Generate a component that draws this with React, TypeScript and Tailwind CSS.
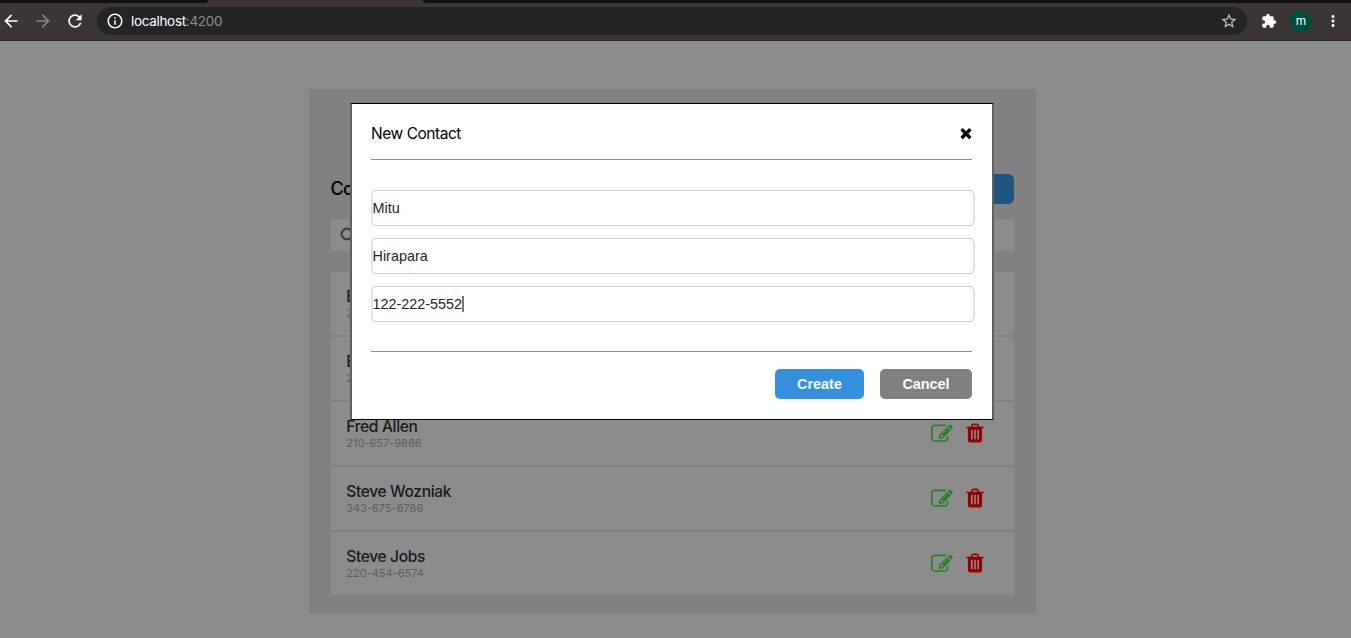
import React from "react";
import {
  MdArrowBack,
  MdArrowForward,
  MdExtension,
  MdInfoOutline,
  MdMoreVert,
  MdRefresh,
  MdStarBorder,
} from "react-icons/md";

const contacts = [
  { name: "Ed", phone: "210" },
  { name: "Ed", phone: "213" },
  { name: "Fred Allen", phone: "210-657-9886" },
  { name: "Steve Wozniak", phone: "343-675-8786" },
  { name: "Steve Jobs", phone: "220-454-6574" },
];

function EditIcon() {
  return (
    <svg viewBox="0 0 1792 1792" className="-mr-[0.4px] ml-[0.4px] size-[22px] shrink-0 fill-[#258025]">
      <path d="M888 1184l116-116-152-152-116 116v56h96v96h56zm440-720q-16-16-33 1l-350 350q-17 17-1 33t33-1l350-350q17-17 1-33zm80 594v190q0 119-84.5 203.5t-203.5 84.5h-832q-119 0-203.5-84.5t-84.5-203.5v-832q0-119 84.5-203.5t203.5-84.5h832q63 0 117 25 15 7 18 23 3 17-9 29l-49 49q-14 14-32 8-23-6-45-6h-832q-66 0-113 47t-47 113v832q0 66 47 113t113 47h832q66 0 113-47t47-113v-126q0-13 9-22l64-64q15-15 35-7t20 29zm-96-738l288 288-672 672h-288v-288zm444 132l-92 92-288-288 92-92q28-28 68-28t68 28l152 152q28 28 28 68t-28 68z" />
    </svg>
  );
}

function TrashIcon() {
  return (
    <svg viewBox="0 0 1792 1792" className="-mt-px size-[22px] shrink-0 fill-[#960000]">
      <path d="M704 1376v-704q0-14-9-23t-23-9h-64q-14 0-23 9t-9 23v704q0 14 9 23t23 9h64q14 0 23-9t9-23zm256 0v-704q0-14-9-23t-23-9h-64q-14 0-23 9t-9 23v704q0 14 9 23t23 9h64q14 0 23-9t9-23zm256 0v-704q0-14-9-23t-23-9h-64q-14 0-23 9t-9 23v704q0 14 9 23t23 9h64q14 0 23-9t9-23zm-544-992h448l-48-117q-7-9-17-11h-317q-10 2-17 11zm928 32v64q0 14-9 23t-23 9h-96v948q0 83-47 143.5t-113 60.5h-832q-66 0-113-58.5t-47-141.5v-952h-96q-14 0-23-9t-9-23v-64q0-14 9-23t23-9h309l70-167q15-37 54-63t79-26h320q40 0 79 26t54 63l70 167h309q14 0 23 9t9 23z" />
    </svg>
  );
}

function CloseIcon() {
  return (
    <svg viewBox="0 0 1792 1792" className="size-4 fill-black">
      <path d="M1490 1322q0 40-28 68l-136 136q-28 28-68 28t-68-28l-294-294-294 294q-28 28-68 28t-68-28l-136-136q-28-28-28-68t28-68l294-294-294-294q-28-28-28-68t28-68l136-136q28-28 68-28t68 28l294 294 294-294q28-28 68-28t68 28l136 136q28 28 28 68t-28 68l-294 294 294 294q28 28 28 68z" />
    </svg>
  );
}

function SearchIcon() {
  return (
    <svg viewBox="0 0 16 16" className="size-4 fill-none stroke-[#3c3c3c] stroke-[2.2]">
      <circle cx="6.9" cy="7" r="5.3" />
      <path d="M11 11l4 4" />
    </svg>
  );
}

function BrowserBar() {
  return (
    <header className="flex h-[41px] flex-col border-b border-[#2b2727] bg-[#3c3535]">
      <div className="flex h-[3px] justify-between">
        <div className="w-[208px] rounded-br-[5px] bg-[#121111]" />
        <div className="w-[928px] rounded-bl-[5px] bg-[#121111]" />
      </div>
      <div className="flex h-9 items-center text-white">
        <MdArrowBack className="ml-px size-5" />
        <MdArrowForward className="ml-3 size-5 text-[#8b8686]" />
        <MdRefresh className="ml-3 size-5" />
        <div className="ml-3 flex h-7 w-[1150px] items-center rounded-full bg-[#242426] pr-2 pl-[9px]">
          <MdInfoOutline className="size-[18px]" />
          <span className="ml-[7px] flex-1 font-['Inter',sans-serif] text-[13.5px] tracking-[-0.32px] text-[#8d8d8e]">
            <span className="text-white">localhost</span>:4200
          </span>
          <MdStarBorder className="mr-px size-[18px] text-[#c5c5c5]" />
        </div>
        <MdExtension className="ml-3.5 size-4" />
        <div className="ml-[13px] flex size-[22px] items-center justify-center rounded-full bg-[#004d40] font-['Inter',sans-serif] text-xs">
          <span className="-mt-px">m</span>
        </div>
        <MdMoreVert className="ml-3 size-[18px]" />
      </div>
    </header>
  );
}

function ContactList() {
  return (
    <section className="mt-12 ml-[309px] flex h-[525px] w-[727px] flex-col bg-[#818181] px-[22px] pt-[85px]">
      <div className="flex h-[30px] items-center justify-between">
        <h2 className="-ml-[0.5px] font-['Inter',sans-serif] text-lg font-medium tracking-[-0.6px]">Contacts</h2>
        <div className="h-[30px] w-[100px] rounded-md bg-[#1f5380]" />
      </div>
      <div className="mt-[15px] flex h-8 items-center bg-[#8c8c8c] pl-[9px]">
        <SearchIcon />
      </div>
      <ul className="mt-[21px] flex flex-col gap-[2px]">
        {contacts.map((c) => (
          <li key={c.phone} className="flex h-[63px] items-center bg-[#8c8c8c] pr-7 pl-[15.3px]">
            <div className="flex-1 pt-px font-['Inter',sans-serif]">
              <div className="pt-px text-[15.5px] leading-[18px] font-medium tracking-[-0.33px] text-[#181a1d]">
                {c.name}
              </div>
              <div className="text-[11px] leading-[15px] text-[#5d5d5d]">{c.phone}</div>
            </div>
            <div className="flex gap-[11px]">
              <EditIcon />
              <TrashIcon />
            </div>
          </li>
        ))}
      </ul>
    </section>
  );
}

function Field({ value, active = false }: { value: string; active?: boolean }) {
  return (
    <div className="flex h-9 w-[604px] items-center rounded-[5px] border-x-2 border-y border-x-[#e2e2e2] border-y-[#cccccc] pt-0.5 font-['Liberation_Sans',sans-serif] text-[14.4px] text-[#212529]">
      <span className="-ml-[0.5px]">{value}</span>
      {active && <span className="-mt-0.5 h-4 w-[1.5px] bg-[#777]" />}
    </div>
  );
}

function NewContactDialog() {
  return (
    <div
      role="dialog"
      className="absolute top-[103px] left-[350px] flex h-[317px] w-[644px] flex-col border-x-2 border-y border-x-[#606060] border-y-black bg-white px-[19px]"
    >
      <div className="mr-px flex h-[56px] items-center justify-between border-b border-[#909090] pt-[3px]">
        <h1 className="pt-0.5 font-['Inter',sans-serif] text-[15.5px] tracking-[-0.46px]">New Contact</h1>
        <div className="-mr-[2.4px]">
          <CloseIcon />
        </div>
      </div>
      <div className="mt-[30px] flex flex-col gap-3">
        <Field value="Mitu" />
        <Field value="Hirapara" />
        <Field value="122-222-5552" active />
      </div>
      <div className="mt-[29px] mr-px flex justify-end gap-4 border-t border-[#909090] pt-[17px] font-['Liberation_Sans',sans-serif] text-[14.4px] font-bold text-white">
        <button className="h-[30px] w-[89px] rounded-[5px] bg-[#3490dc] pt-0.5">Create</button>
        <button className="h-[30px] w-[92px] rounded-[5px] bg-[#808080] pt-0.5">Cancel</button>
      </div>
    </div>
  );
}

export default function App() {
  return (
    <div className="relative h-[638px] w-[1351px] overflow-hidden bg-[#8c8c8c]">
      <BrowserBar />
      <ContactList />
      <NewContactDialog />
    </div>
  );
}
